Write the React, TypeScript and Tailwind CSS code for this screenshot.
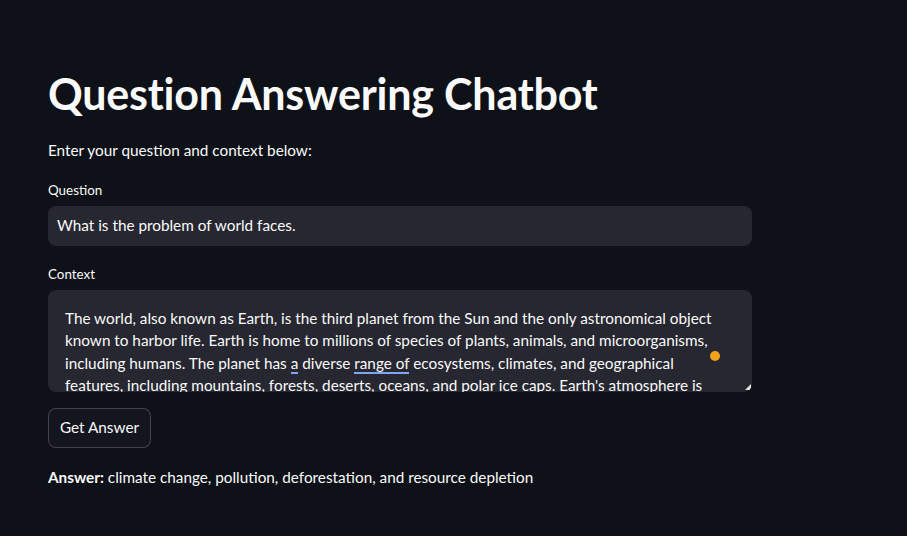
export default function App() {
  const font = { fontFamily: '"Source Sans Pro", Lato, "Noto Sans", sans-serif' };
  return (
    <div className="min-h-screen w-full bg-[#0e1117] text-[#fafafa]" style={font}>
      <div className="w-[704px] ml-12 pt-[68px]">
        <h1 className="text-[43px] font-bold leading-[1.2] tracking-[-0.2px]">Question Answering Chatbot</h1>

        <p className="mt-[18px] text-[15.3px] leading-[1.6]">Enter your question and context below:</p>

        {/* Question input */}
        <div className="mt-[18px]">
          <label className="block text-[13.4px] leading-[1.6] mb-[4px]">Question</label>
          <div className="h-[40px] rounded-lg bg-[#262730] px-[9px] flex items-center text-[15.3px]">
            What is the problem of world faces.
          </div>
        </div>

        {/* Context textarea */}
        <div className="mt-[18px]">
          <label className="block text-[13.4px] leading-[1.6] mb-[5px]">Context</label>
          <div className="relative h-[102px] rounded-lg bg-[#262730] overflow-hidden">
            <div className="pl-[17px] pt-[17px] text-[15.3px] leading-[22.4px] whitespace-nowrap">
              <div>The world, also known as Earth, is the third planet from the Sun and the only astronomical object</div>
              <div>known to harbor life. Earth is home to millions of species of plants, animals, and microorganisms,</div>
              <div>
                including humans. The planet has{" "}
                <span className="border-b-2 border-[#7ea6f2]">a</span> diverse{" "}
                <span className="border-b-2 border-[#7ea6f2]">range of</span> ecosystems, climates, and geographical
              </div>
              <div>features, including mountains, forests, deserts, oceans, and polar ice caps. Earth's atmosphere is</div>
            </div>
            <span className="absolute right-[32px] top-[61px] h-[10px] w-[10px] rounded-full bg-[#f0a21b]" />
            <svg className="absolute right-[1px] bottom-[2px]" width="6" height="6" viewBox="0 0 6 6">
              <polygon points="6,0 6,6 0,6" fill="#e6e6e6" />
            </svg>
          </div>
        </div>

        <button className="mt-[16px] h-[40px] px-[11px] rounded-lg border border-[#fafafa33] bg-[#13161e] text-[15.3px]">
          Get Answer
        </button>

        <p className="mt-[17px] text-[15.3px] leading-[1.6]">
          <span className="font-bold">Answer:</span> climate change, pollution, deforestation, and resource depletion
        </p>
      </div>
    </div>
  );
}
